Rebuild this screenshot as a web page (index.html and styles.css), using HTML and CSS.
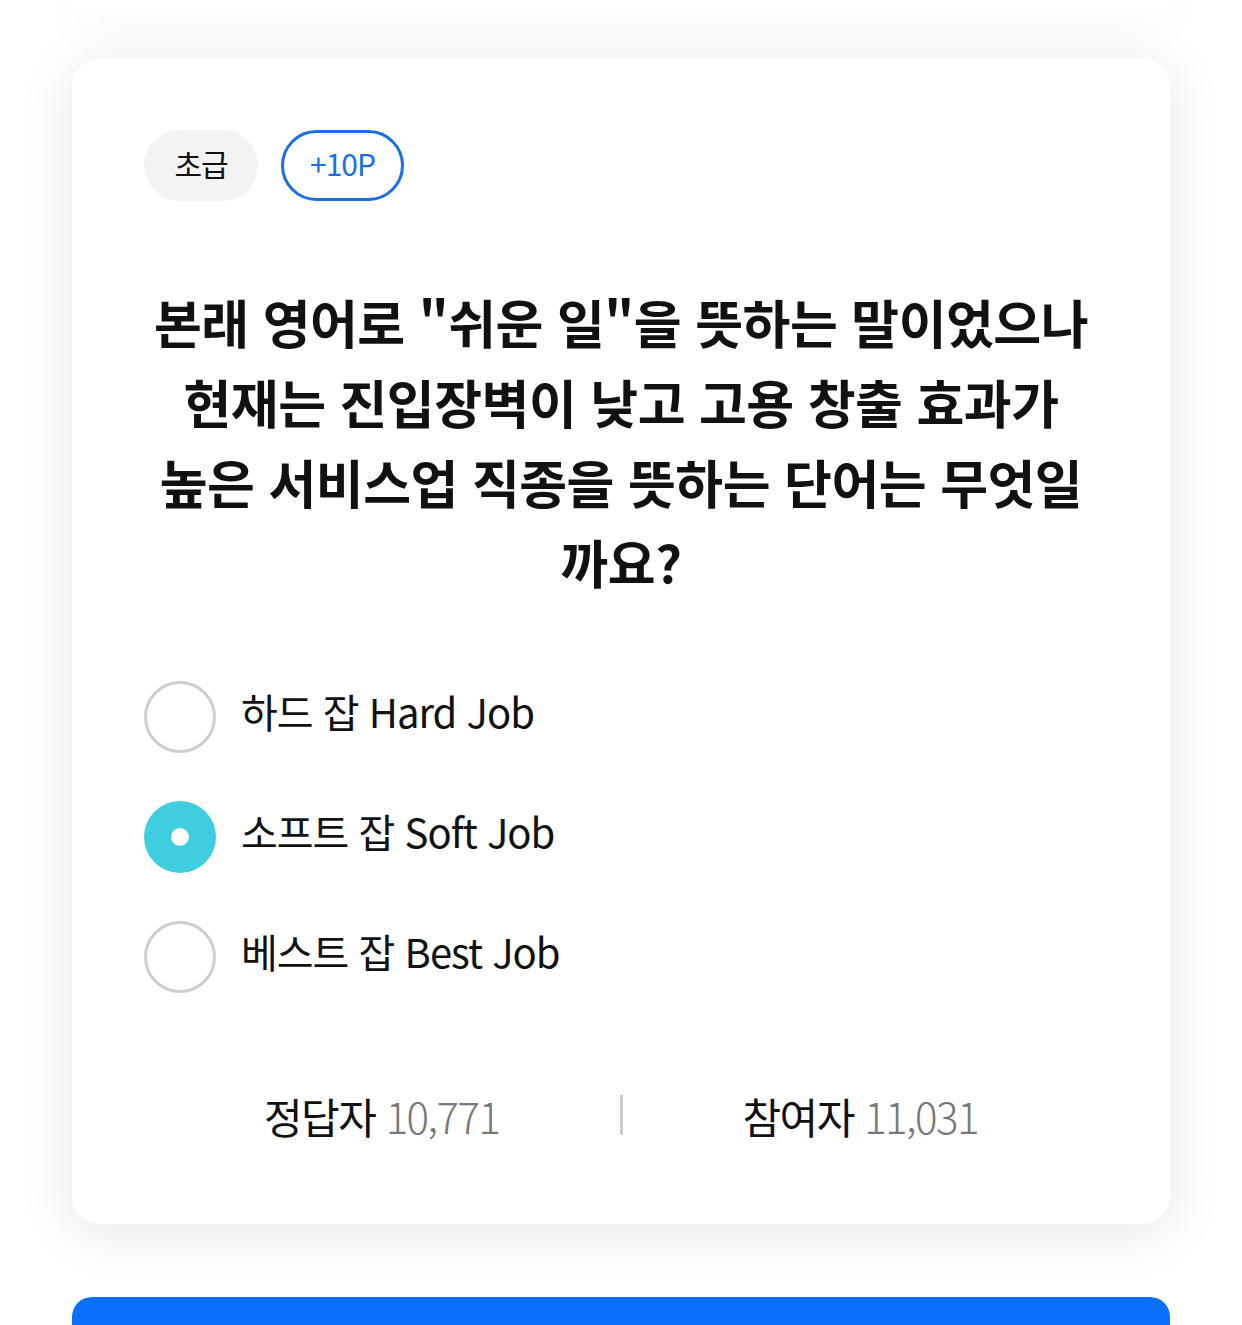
FILE: index.html
```html
<!DOCTYPE html>
<html lang="ko">
<head>
<meta charset="UTF-8">
<meta name="viewport" content="width=device-width, initial-scale=1.0">
<title>오늘의 퀴즈</title>
<link rel="stylesheet" href="styles.css">
</head>
<body>

<div class="page">
    <div class="prev-card"></div>

    <div class="quiz-card">
        <div class="badges">
            <span class="badge level">초급</span>
            <span class="badge point">+10P</span>
        </div>

        <h1 class="question">본래 영어로 "쉬운 일"을 뜻하는 말이었으나<br>현재는 진입장벽이 낮고 고용 창출 효과가<br>높은 서비스업 직종을 뜻하는 단어는 무엇일<br>까요?</h1>

        <ul class="options">
            <li class="option"><span class="radio"></span><span class="label">하드 잡 Hard Job</span></li>
            <li class="option selected"><span class="radio"></span><span class="label">소프트 잡 Soft Job</span></li>
            <li class="option"><span class="radio"></span><span class="label">베스트 잡 Best Job</span></li>
        </ul>

        <div class="stats">
            <div class="stat">정답자 <span class="num">10,771</span></div>
            <div class="divider"></div>
            <div class="stat">참여자 <span class="num">11,031</span></div>
        </div>
    </div>

    <div class="submit-button"></div>
</div>

</body>
</html>
```

FILE: styles.css
```css
body, html {
    margin: 0;
    padding: 0;
    background-color: #ffffff;
    font-family: "Noto Sans CJK KR", "Noto Sans", sans-serif;
    color: #111111;
    overflow: hidden;
}

.page {
    padding: 0 72px;
    display: flex;
    flex-direction: column;
}

.prev-card {
    height: 10px;
    background-color: #ffffff;
    border-radius: 0 0 24px 24px;
    box-shadow: 0 8px 56px rgba(0, 0, 0, 0.1);
}

.quiz-card {
    margin-top: 48px;
    background-color: #ffffff;
    border-radius: 28px;
    box-shadow: 0 8px 56px rgba(0, 0, 0, 0.1);
    padding: 72px 72px 80px;
}

.badges {
    display: flex;
    gap: 23px;
}

.badge {
    height: 71px;
    box-sizing: border-box;
    padding-bottom: 6px;
    display: flex;
    align-items: center;
    justify-content: center;
    border-radius: 36px;
    font-size: 30px;
    letter-spacing: -1px;
}

.badge.level {
    width: 114px;
    background-color: #f3f3f3;
    color: #111111;
}

.badge.point {
    width: 123px;
    border: 3px solid #1b6fe6;
    color: #1b6fe6;
}

.question {
    margin: 81px -24px 0;
    font-size: 52px;
    font-weight: 700;
    line-height: 80px;
    letter-spacing: -0.5px;
    text-align: center;
    white-space: nowrap;
}

.options {
    list-style: none;
    margin: 79px 0 0;
    padding: 0;
    display: flex;
    flex-direction: column;
    gap: 48px;
}

.option {
    display: flex;
    align-items: center;
    gap: 25px;
    height: 72px;
    font-size: 40px;
    letter-spacing: -1px;
}

.option .label {
    padding-bottom: 12px;
}

.radio {
    width: 72px;
    height: 72px;
    box-sizing: border-box;
    border-radius: 50%;
    border: 3px solid #cfcfcf;
    flex-shrink: 0;
    display: flex;
    align-items: center;
    justify-content: center;
}

.option.selected .radio {
    border: none;
    background-color: #3fcee0;
}

.option.selected .radio::after {
    content: "";
    width: 18px;
    height: 18px;
    border-radius: 50%;
    background-color: #ffffff;
}

.stats {
    margin-top: 93px;
    display: flex;
    align-items: center;
    height: 58px;
}

.stat {
    flex: 1;
    text-align: center;
    font-size: 42px;
    letter-spacing: -1.5px;
}

.stat .num {
    color: #777777;
    font-weight: 300;
}

.divider {
    width: 3px;
    height: 40px;
    background-color: #cccccc;
}

.submit-button {
    margin-top: 73px;
    height: 28px;
    background-color: #0a6ffc;
    border-radius: 20px 20px 0 0;
}
```
